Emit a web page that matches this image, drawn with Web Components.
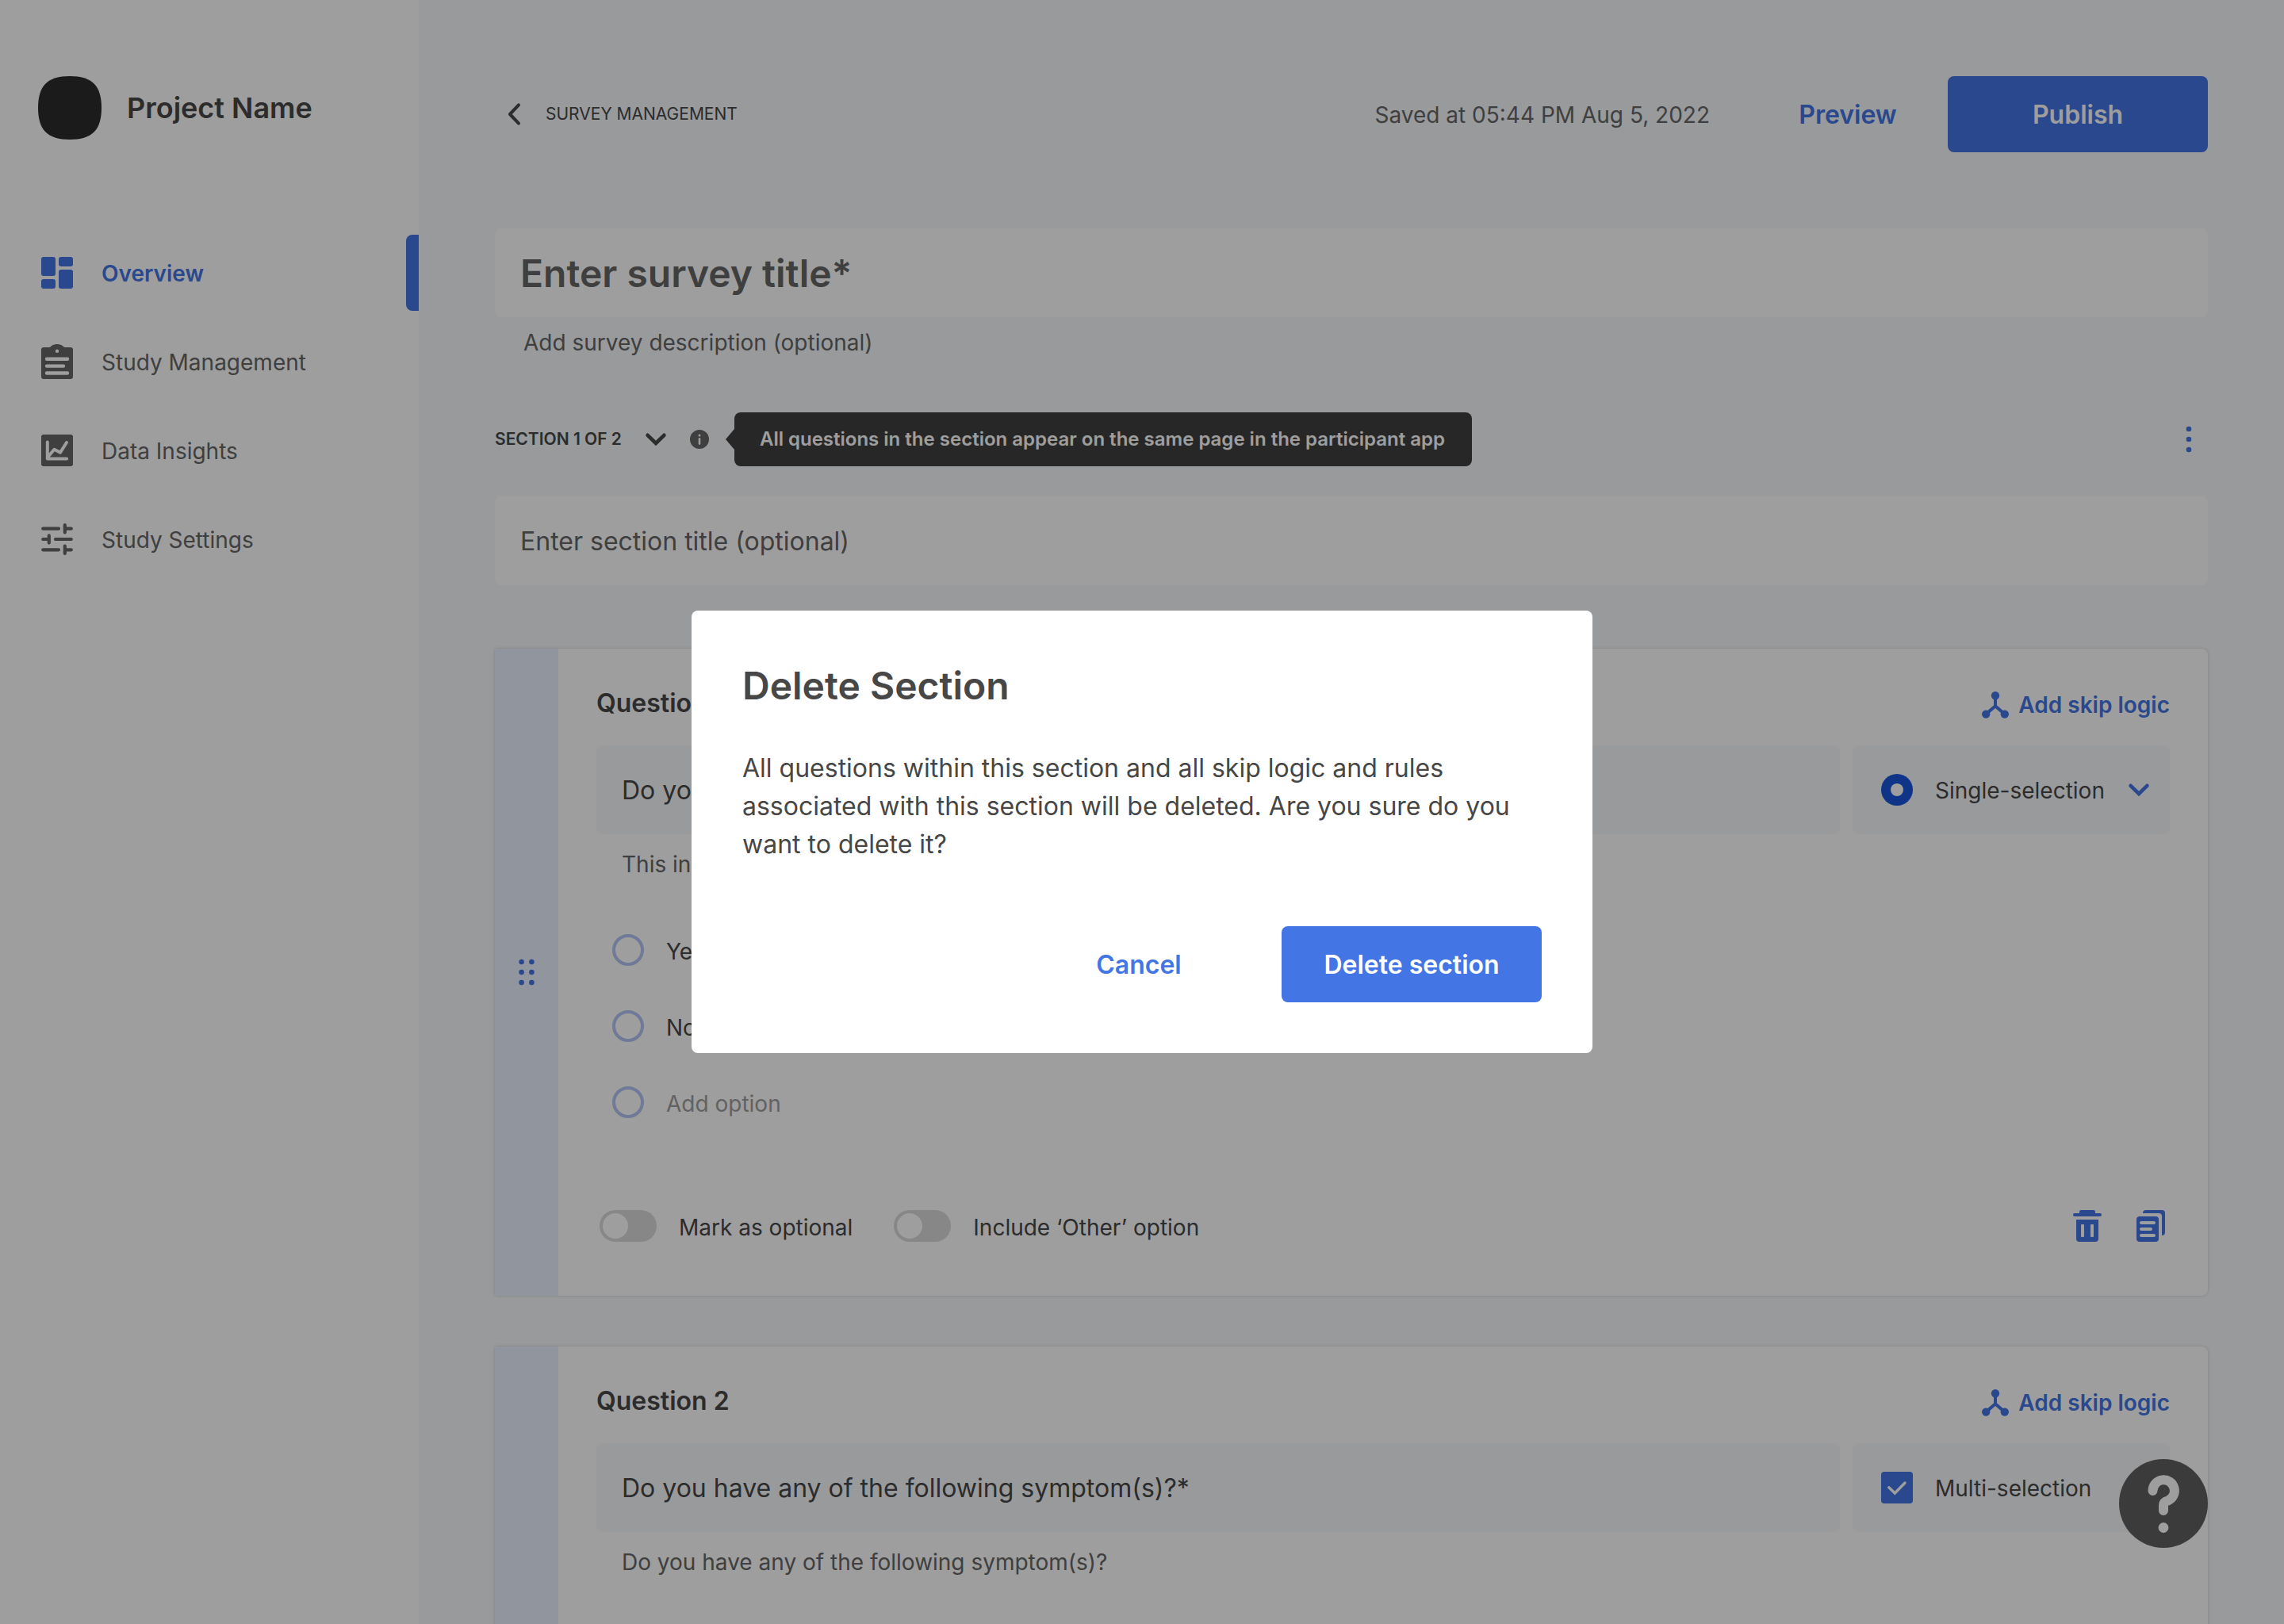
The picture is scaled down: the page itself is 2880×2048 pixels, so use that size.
<!DOCTYPE html>
<html lang="en">
<head>
<meta charset="utf-8">
<title>Survey Management</title>
<style>
  :root {
    --blue: #4475e4;
    --ink: #474747;
    --muted: #666666;
    --faint: #9e9e9e;
    --page: #f7f9fc;
    --white: #ffffff;
    --tint: #e8f0ff;
    --radius: 8px;
  }
  body {
    margin: 0;
    font-family: Inter, "Liberation Sans", sans-serif;
    font-size: 28px;
    line-height: 40px;
    color: var(--ink);
  }
</style>
</head>
<body>
<survey-app>
  <side-nav slot="nav" project="Project Name">
    <nav-item icon="dashboard" active>Overview</nav-item>
    <nav-item icon="clipboard">Study Management</nav-item>
    <nav-item icon="chart">Data Insights</nav-item>
    <nav-item icon="sliders">Study Settings</nav-item>
  </side-nav>

  <top-bar saved="Saved at 05:44 PM Aug 5, 2022">Survey Management</top-bar>

  <survey-heading></survey-heading>

  <section-heading label="Section 1 of 2">All questions in the section appear on the same page in the participant app</section-heading>

  <question-card heading="Question 1" kind="Single-selection" icon="radio" question="Do you smoke?*" note="This includes e-cigarettes" editing>
    <option-row>Yes</option-row>
    <option-row>No</option-row>
    <option-row empty>Add option</option-row>
  </question-card>

  <question-card heading="Question 2" kind="Multi-selection" icon="checkbox" question="Do you have any of the following symptom(s)?*" note="Do you have any of the following symptom(s)?"></question-card>

  <help-button slot="overlay"></help-button>

  <confirm-dialog slot="overlay" heading="Delete Section" cancel="Cancel" confirm="Delete section">All questions within this section and all skip logic and rules associated with this section will be deleted. Are you sure do you want to delete it?</confirm-dialog>
</survey-app>

<script>
const BASE = `
  *, *::before, *::after { box-sizing: border-box; }
  button, input, select { font: inherit; color: inherit; margin: 0; padding: 0; border: 0; background: none; letter-spacing: inherit; }
  button { cursor: pointer; }
  a { color: inherit; text-decoration: none; }
  h1, h2, p { margin: 0; }
  input::placeholder { color: var(--muted); opacity: 1; }
`;

const ICONS = {
  dashboard: [40, 40, `<g fill="currentColor"><rect width="18" height="24" rx="3"/><rect x="22" width="18" height="12" rx="3"/><rect y="28" width="18" height="12" rx="3"/><rect x="22" y="16" width="18" height="24" rx="3"/></g>`],
  clipboard: [40, 44, `<path fill="currentColor" fill-rule="evenodd" d="M3 4H11C13 1.500 16.500 0 20 0S27 1.500 29 4H37A3 3 0 0 1 40 7V41A3 3 0 0 1 37 44H3A3 3 0 0 1 0 41V7A3 3 0 0 1 3 4ZM20 6.500A2.200 2.200 0 1 0 20 10.900A2.200 2.200 0 1 0 20 6.500Z"/><path d="M7 18.700H33M7 27.600H28M7 36.500H33" stroke="var(--white)" stroke-width="4.400" stroke-linecap="round"/>`],
  chart: [40, 40, `<rect width="40" height="40" rx="3" fill="currentColor"/><path d="M7.800 9.500V30.500H32.200M8.200 28.500L16.400 18.700L24 22.600L32 10" fill="none" stroke="var(--white)" stroke-width="4" stroke-linecap="round" stroke-linejoin="round"/>`],
  sliders: [40, 40, `<path d="M2.200 6.700H22M2.200 33.300H22M18 20H37.800M2.200 20H10M30 6.700H37.800M30 33.300H37.800M29.800 2V11.400M9.800 15.400V24.600M29.800 28.600V38" fill="none" stroke="currentColor" stroke-width="4.200" stroke-linecap="round"/><path d="M24 3h3v8h-3zM24 29h3v8h-3zM12.500 16h3v8h-3z" fill="var(--white)"/>`],
  back: [16, 28, `<path d="M14 2.400L3 14L14 25.600" fill="none" stroke="currentColor" stroke-width="4" stroke-linecap="round" stroke-linejoin="round"/>`],
  down: [26, 16, `<path d="M2.600 2.800L13 13L23.400 2.800" fill="none" stroke="currentColor" stroke-width="4.600" stroke-linecap="round" stroke-linejoin="miter"/>`],
  info: [24, 24, `<circle cx="12" cy="12" r="12" fill="currentColor"/><circle cx="12" cy="7" r="1.500" fill="var(--page)"/><path d="M12 11.200V17.600" stroke="var(--page)" stroke-width="2.600" stroke-linecap="round"/>`],
  more: [8, 34, `<g fill="currentColor"><circle cx="4" cy="4" r="3.300"/><circle cx="4" cy="17" r="3.300"/><circle cx="4" cy="30" r="3.300"/></g>`],
  drag: [20, 34, `<g fill="currentColor"><circle cx="3.600" cy="4" r="3.300"/><circle cx="3.600" cy="17" r="3.300"/><circle cx="3.600" cy="30" r="3.300"/><circle cx="16.400" cy="4" r="3.300"/><circle cx="16.400" cy="17" r="3.300"/><circle cx="16.400" cy="30" r="3.300"/></g>`],
  branch: [34, 34, `<g fill="currentColor"><circle cx="17" cy="5.200" r="5.200"/><circle cx="5.200" cy="28.600" r="5.200"/><circle cx="28.800" cy="28.600" r="5.200"/></g><path d="M17 5V18.500M5.200 28.600L17 18.500L28.800 28.600" fill="none" stroke="currentColor" stroke-width="4"/>`],
  radio: [40, 40, `<circle cx="20" cy="20" r="20" fill="#1a56db"/><circle cx="20" cy="20" r="8" fill="var(--white)"/>`],
  checkbox: [40, 40, `<rect width="40" height="40" rx="4" fill="var(--blue)"/><path d="M9.800 19.800L17.300 27L30 14" fill="none" stroke="var(--white)" stroke-width="3.400" stroke-linecap="round"/>`],
  trash: [36, 40, `<path fill="currentColor" fill-rule="evenodd" d="M10 0H26A2 2 0 0 1 28 2V4H34A2 2 0 0 1 34 8H2A2 2 0 0 1 2 4H8V2A2 2 0 0 1 10 0ZM4 12H32V36A4 4 0 0 1 28 40H8A4 4 0 0 1 4 36ZM11 18A1 1 0 0 0 10 19V33A1 1 0 0 0 11 34H13A1 1 0 0 0 14 33V19A1 1 0 0 0 13 18ZM23 18A1 1 0 0 0 22 19V33A1 1 0 0 0 23 34H25A1 1 0 0 0 26 33V19A1 1 0 0 0 25 18Z"/>`],
  copy: [36, 40, `<rect y="8" width="28" height="32" rx="4" fill="currentColor"/><path fill="currentColor" d="M8 4A4 4 0 0 1 12 0H32A4 4 0 0 1 36 4V28A4 4 0 0 1 32 32V8A4 4 0 0 0 28 4Z"/><path d="M6 16H22M6 24H18M6 32H22" stroke="var(--white)" stroke-width="4" stroke-linecap="round"/>`],
  help: [112, 112, `<path d="M42.500 40A13.700 13.700 0 1 1 61.500 52.600Q56 54.200 56 58V65" fill="none" stroke="currentColor" stroke-width="12" stroke-linecap="round" stroke-linejoin="round"/><circle cx="56" cy="86.500" r="6.400" fill="currentColor"/>`],
  logo: [80, 80, `<path fill="#2d2d2d" d="M40 0C68 0 80 12 80 40S68 80 40 80S0 68 0 40S12 0 40 0Z"/>`]
};

class Part extends HTMLElement {
  connectedCallback() {
    if (this.shadowRoot) return;
    const root = this.attachShadow({ mode: "open" });
    root.innerHTML = `<style>${BASE}${this.css()}</style>${this.html()}`;
  }
  attr(name) { return this.getAttribute(name) || ""; }
}

customElements.define("ui-icon", class extends Part {
  css() { return `:host { display: block; flex: none; } svg { display: block; overflow: visible; }`; }
  html() {
    const [w, h, body] = ICONS[this.attr("name")];
    return `<svg width="${w}" height="${h}" viewBox="0 0 ${w} ${h}" aria-hidden="true">${body}</svg>`;
  }
});

customElements.define("ui-button", class extends Part {
  css() {
    return `
      :host { display: block; flex: none; }
      button { display: block; width: 100%; height: 96px; padding: 2px 32px 0; border-radius: var(--radius); font-size: 32px; font-weight: 600; color: var(--blue); white-space: nowrap; }
      :host([primary]) button { background: var(--blue); color: var(--white); }`;
  }
  html() { return `<button type="button"><slot></slot></button>`; }
});

customElements.define("survey-app", class extends Part {
  css() {
    return `
      :host { display: flex; height: 100vh; background: var(--page); }
      main { flex: 1; min-width: 0; overflow-y: auto; scrollbar-width: none; padding: 96px; }`;
  }
  html() { return `<slot name="nav"></slot><main><slot></slot></main><slot name="overlay"></slot>`; }
});

customElements.define("side-nav", class extends Part {
  css() {
    return `
      :host { display: flex; flex-direction: column; gap: 120px; flex: none; width: 528px; padding-top: 96px; background: var(--white); }
      header { display: flex; align-items: center; gap: 32px; padding-left: 48px; font-size: 36px; font-weight: 600; }
      nav { display: flex; flex-direction: column; gap: 16px; }`;
  }
  html() {
    return `<header><ui-icon name="logo"></ui-icon><span>${this.attr("project")}</span></header><nav aria-label="Main"><slot></slot></nav>`;
  }
});

customElements.define("nav-item", class extends Part {
  css() {
    return `
      :host { display: block; color: var(--muted); }
      :host([active]) { color: var(--blue); font-weight: 600; }
      a { display: flex; align-items: center; gap: 36px; height: 96px; padding-left: 52px; }
      span { padding-top: 2px; }
      i { display: none; width: 16px; height: 96px; margin-left: auto; border-radius: var(--radius) 0 0 var(--radius); background: var(--blue); }
      :host([active]) i { display: block; }`;
  }
  html() { return `<a href="#"><ui-icon name="${this.attr("icon")}"></ui-icon><span><slot></slot></span><i></i></a>`; }
});

customElements.define("top-bar", class extends Part {
  css() {
    return `
      :host { display: flex; align-items: center; height: 96px; margin-bottom: 96px; }
      a { display: flex; align-items: center; gap: 32px; padding-left: 16px; margin-right: auto; font-size: 21px; text-transform: uppercase; }
      p { margin-right: 64px; padding-top: 2px; color: var(--muted); }
      .preview { width: 220px; margin-right: 16px; }
      .publish { width: 328px; }`;
  }
  html() {
    return `<a href="#"><ui-icon name="back"></ui-icon><span><slot></slot></span></a><p>${this.attr("saved")}</p>
      <ui-button class="preview">Preview</ui-button><ui-button class="publish" primary>Publish</ui-button>`;
  }
});

customElements.define("survey-heading", class extends Part {
  css() {
    return `
      :host { display: block; margin-bottom: 68px; }
      input { display: block; width: 100%; }
      .title { height: 112px; padding: 0 32px; border-radius: var(--radius); background: var(--white); font-size: 48px; font-weight: 600; }
      .about { height: 40px; margin-top: 12px; padding: 0 36px; }`;
  }
  html() {
    return `<input class="title" type="text" aria-label="Survey title" placeholder="Enter survey title*">
      <input class="about" type="text" aria-label="Survey description" placeholder="Add survey description (optional)">`;
  }
});

customElements.define("section-heading", class extends Part {
  css() {
    return `
      :host { display: block; margin-bottom: 80px; }
      .row { display: flex; align-items: center; height: 68px; margin-bottom: 38px; }
      .pick { display: flex; align-items: center; gap: 30px; margin-right: 30px; font-size: 21px; font-weight: 600; text-transform: uppercase; }
      .info { color: var(--muted); margin-right: 32px; }
      .tip { position: relative; height: 68px; padding: 0 34px 0 32px; border-radius: var(--radius); background: #404040; color: var(--white); font-size: 24px; font-weight: 600; line-height: 68px; white-space: nowrap; }
      .tip::before { content: ""; position: absolute; right: 100%; top: 21px; border: solid transparent; border-width: 13px 11px 13px 0; border-right-color: #404040; }
      .more { margin-left: auto; padding: 0 20px; color: var(--blue); }
      input { display: block; width: 100%; height: 112px; padding: 0 32px; border-radius: var(--radius); background: var(--white); font-size: 32px; }`;
  }
  html() {
    return `<div class="row">
        <button class="pick" type="button" aria-haspopup="listbox"><span>${this.attr("label")}</span><ui-icon name="down"></ui-icon></button>
        <ui-icon class="info" name="info"></ui-icon>
        <div class="tip" role="tooltip"><slot></slot></div>
        <button class="more" type="button" aria-label="Section actions"><ui-icon name="more"></ui-icon></button>
      </div>
      <input type="text" aria-label="Section title" placeholder="Enter section title (optional)">`;
  }
});

customElements.define("option-row", class extends Part {
  css() {
    return `
      :host { display: block; height: 40px; }
      :host([empty]) { color: var(--faint); }
      label { display: flex; gap: 28px; }
      span { padding-top: 2px; }
      input { appearance: none; flex: none; width: 40px; height: 40px; border: 4px solid #b4c5f5; border-radius: 50%; }`;
  }
  html() { return `<label><input type="radio"><span><slot></slot></span></label>`; }
});

customElements.define("toggle-switch", class extends Part {
  css() {
    return `
      :host { display: block; height: 40px; }
      label { display: flex; gap: 28px; }
      span { padding-top: 2px; }
      input { appearance: none; flex: none; width: 72px; height: 40px; padding: 4px; border-radius: 20px; background: #dadada; }
      input::before { content: ""; display: block; width: 32px; height: 32px; border-radius: 50%; background: var(--white); }
      input:checked { background: var(--blue); }
      input:checked::before { margin-left: auto; }`;
  }
  html() { return `<label><input type="checkbox" role="switch"><span><slot></slot></span></label>`; }
});

customElements.define("question-card", class extends Part {
  css() {
    return `
      :host { display: flex; min-height: 816px; margin-bottom: 64px; border-radius: 2px var(--radius) var(--radius) 2px; background: var(--white); box-shadow: 0 0 4px rgba(0, 0, 0, .16); }
      .grip { display: flex; align-items: center; justify-content: center; flex: none; width: 80px; border-radius: 2px 0 0 2px; background: var(--tint); color: var(--blue); cursor: grab; }
      .body { flex: 1; min-width: 0; padding: 48px 48px 68px; }
      header { display: flex; align-items: center; justify-content: space-between; height: 42px; margin-bottom: 32px; }
      h2 { font-size: 32px; font-weight: 600; }
      .skip { display: flex; align-items: center; gap: 12px; padding-top: 4px; color: var(--blue); font-weight: 600; }
      .ask { display: flex; gap: 16px; }
      .ask > * { height: 112px; border-radius: var(--radius); background: var(--page); }
      .question { flex: 1; min-width: 0; padding: 0 32px; font-size: 32px; }
      .kind { display: flex; align-items: center; flex: none; width: 400px; padding: 0 26px 0 36px; gap: 28px; }
      .kind select { appearance: none; flex: 1; min-width: 0; padding-top: 2px; outline: none; }
      .kind ui-icon:last-child { color: var(--blue); }
      .note { display: block; width: 100%; height: 40px; margin-top: 18px; padding: 0 32px; color: var(--muted); }
      .options { display: flex; flex-direction: column; gap: 56px; margin-top: 68px; padding-left: 20px; }
      footer { display: flex; align-items: center; margin-top: 116px; padding: 0 6px 0 4px; }
      toggle-switch { margin-right: 52px; }
      .tools { display: flex; gap: 44px; margin-left: auto; color: var(--blue); }`;
  }
  html() {
    const footer = `<footer>
          <toggle-switch>Mark as optional</toggle-switch>
          <toggle-switch>Include ‘Other’ option</toggle-switch>
          <div class="tools">
            <button type="button" aria-label="Delete question"><ui-icon name="trash"></ui-icon></button>
            <button type="button" aria-label="Duplicate question"><ui-icon name="copy"></ui-icon></button>
          </div>
        </footer>`;
    return `<button class="grip" type="button" aria-label="Move question"><ui-icon name="drag"></ui-icon></button>
      <div class="body">
        <header><h2>${this.attr("heading")}</h2><button class="skip" type="button"><ui-icon name="branch"></ui-icon><span>Add skip logic</span></button></header>
        <div class="ask">
          <input class="question" type="text" aria-label="Question" value="${this.attr("question")}">
          <div class="kind"><ui-icon name="${this.attr("icon")}"></ui-icon><select aria-label="Answer type"><option>${this.attr("kind")}</option></select><ui-icon name="down"></ui-icon></div>
        </div>
        <input class="note" type="text" aria-label="Question description" value="${this.attr("note")}">
        <div class="options"><slot></slot></div>
        ${this.hasAttribute("editing") ? footer : ""}
      </div>`;
  }
});

customElements.define("help-button", class extends Part {
  css() {
    return `
      :host { position: fixed; right: 96px; bottom: 96px; }
      button { display: block; border-radius: 50%; background: #606060; color: var(--white); }`;
  }
  html() { return `<button type="button" aria-label="Help"><ui-icon name="help"></ui-icon></button>`; }
});

customElements.define("confirm-dialog", class extends Part {
  css() {
    return `
      :host { position: fixed; inset: 0; display: flex; align-items: center; justify-content: center; padding-top: 50px; background: rgba(0, 0, 0, .38); }
      section { width: 1136px; max-width: 100%; padding: 64px; border-radius: var(--radius); background: var(--white); }
      h1 { font-size: 48px; font-weight: 600; line-height: 62px; margin-bottom: 49px; }
      p { font-size: 32px; line-height: 48px; margin-bottom: 79px; }
      .actions { display: flex; justify-content: flex-end; gap: 16px; }
      ui-button { width: 328px; }`;
  }
  html() {
    return `<section role="dialog" aria-modal="true" aria-labelledby="t">
        <h1 id="t">${this.attr("heading")}</h1>
        <p><slot></slot></p>
        <div class="actions"><ui-button>${this.attr("cancel")}</ui-button><ui-button primary>${this.attr("confirm")}</ui-button></div>
      </section>`;
  }
});
</script>
</body>
</html>
